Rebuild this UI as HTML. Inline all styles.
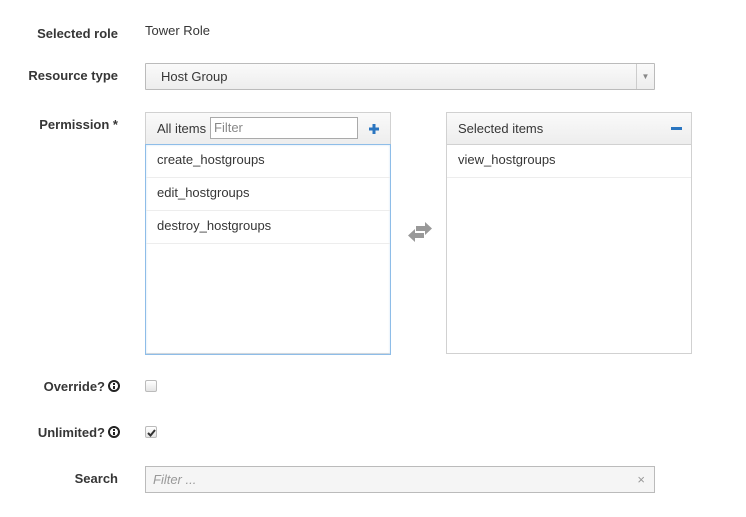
<!DOCTYPE html>
<html><head><meta charset="utf-8"><style>
*{box-sizing:border-box;margin:0;padding:0}
body{width:746px;height:517px;background:#fff;font-family:"Liberation Sans",sans-serif;font-size:13px;color:#363636;position:relative;overflow:hidden}
.a{position:absolute}
.lbl{position:absolute;right:628px;font-weight:bold;color:#363636;white-space:nowrap}
.panel{position:absolute;border:1px solid #d1d1d1;background:#fff}
.hdr{height:32px;background:linear-gradient(#fafafa,#ededed);border-bottom:1px solid #d1d1d1;position:relative}
.item{height:33px;line-height:30px;padding-left:11px;border-bottom:1px solid #ededed}
.cb{position:absolute;width:12px;height:12px;border:1px solid #bbb;border-radius:2px;background:linear-gradient(#fff,#e4e4e4)}
.info{display:inline-block;width:12px;height:12px;border:2px solid #222;border-radius:50%;vertical-align:-1px;margin-left:3px;position:relative}
.info:before{content:"";position:absolute;left:3px;top:1px;width:2px;height:2px;background:#222}
.info:after{content:"";position:absolute;left:3px;top:4px;width:2px;height:3px;background:#222}
</style></head><body>
<div class="lbl" style="top:26px">Selected role</div>
<div class="a" style="left:145px;top:23px">Tower Role</div>

<div class="lbl" style="top:68px">Resource type</div>
<div class="a" style="left:145px;top:63px;width:510px;height:27px;border:1px solid #bbb;border-radius:1px;background:linear-gradient(#fafafa,#ededed)">
<div class="a" style="left:15px;top:5px">Host Group</div>
<div class="a" style="right:0;top:0;width:18px;height:25px;border-left:1px solid #ccc;color:#888;font-size:8px;text-align:center;line-height:25px">▼</div>
</div>

<div class="lbl" style="top:117px">Permission *</div>
<div class="panel" style="left:145px;top:112px;width:246px;height:242px">
<div class="hdr"><span class="a" style="left:11px;top:8px">All items</span>
<div class="a" style="left:64px;top:4px;width:148px;height:22px;border:1px solid #aaa;background:#fff;color:#888;padding-left:3px;line-height:20px">Filter</div>
<svg class="a" style="left:222px;top:10px" width="12" height="12"><path d="M6 1v10M1 6h10" stroke="#2a75c0" stroke-width="3"/></svg>
</div>
<div style="position:absolute;left:-1px;top:31px;width:246px;height:211px;border:1px solid #8ebde8;box-shadow:inset 0 0 2px #cfe3f5">
<div class="item">create_hostgroups</div>
<div class="item">edit_hostgroups</div>
<div class="item">destroy_hostgroups</div>
</div>
</div>

<svg class="a" style="left:407px;top:222px" width="26" height="20"><path d="M9 4h9v-4l7 6.5-7 6.5v-4h-9z" fill="#999"/><path d="M17 11h-9v-4l-7 6.5 7 6.5v-4h9z" fill="#999"/></svg>

<div class="panel" style="left:446px;top:112px;width:246px;height:242px">
<div class="hdr"><span class="a" style="left:11px;top:8px">Selected items</span>
<div class="a" style="left:224px;top:14px;width:11px;height:3px;background:#2a75c0"></div></div>
<div class="item">view_hostgroups</div>
</div>

<div class="lbl" style="top:379px;right:626px">Override?<span class="info"></span></div>
<div class="cb" style="left:145px;top:380px"></div>
<div class="lbl" style="top:425px;right:626px">Unlimited?<span class="info"></span></div>
<div class="cb" style="left:145px;top:426px"><svg class="a" style="left:1px;top:1px" width="9" height="9"><path d="M1 5l2.5 2.5L8 2" stroke="#333" stroke-width="2" fill="none"/></svg></div>

<div class="lbl" style="top:471px">Search</div>
<div class="a" style="left:145px;top:466px;width:510px;height:27px;border:1px solid #bbb;background:#f5f5f5">
<div class="a" style="left:7px;top:5px;color:#999;font-style:italic">Filter ...</div>
<div class="a" style="right:9px;top:5px;color:#999;font-size:13px">×</div>
</div>
</body></html>
